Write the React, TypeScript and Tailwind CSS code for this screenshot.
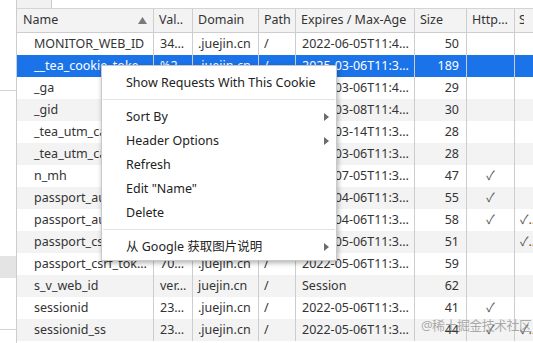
import { useMemo } from "react";

type Row = {
  name: string;
  value: string;
  domain: string;
  path: string;
  expires: string;
  size: string;
  http?: boolean;
  secure?: boolean;
};

const rows: Row[] = [
  { name: "MONITOR_WEB_ID", value: "34…", domain: ".juejin.cn", path: "/", expires: "2022-06-05T11:4…", size: "50" },
  { name: "__tea_cookie_toke…", value: "%2…", domain: ".juejin.cn", path: "/", expires: "2025-03-06T11:3…", size: "189" },
  { name: "_ga", value: "GA…", domain: ".juejin.cn", path: "/", expires: "2024-03-06T11:4…", size: "29" },
  { name: "_gid", value: "GA…", domain: ".juejin.cn", path: "/", expires: "2022-03-08T11:4…", size: "30" },
  { name: "_tea_utm_ca…", value: "{\"…", domain: ".juejin.cn", path: "/", expires: "2022-03-14T11:3…", size: "28" },
  { name: "_tea_utm_ca…", value: "{\"…", domain: ".juejin.cn", path: "/", expires: "2022-03-06T11:3…", size: "28" },
  { name: "n_mh", value: "9-…", domain: ".juejin.cn", path: "/", expires: "2022-07-05T11:3…", size: "47", http: true },
  { name: "passport_au…", value: "%7…", domain: ".juejin.cn", path: "/", expires: "2022-04-06T11:3…", size: "55", http: true },
  { name: "passport_au…", value: "%7…", domain: ".juejin.cn", path: "/", expires: "2022-04-06T11:3…", size: "58", http: true, secure: true },
  { name: "passport_cs…", value: "70…", domain: ".juejin.cn", path: "/", expires: "2022-05-06T11:3…", size: "51", secure: true },
  { name: "passport_csrf_tok…", value: "70…", domain: ".juejin.cn", path: "/", expires: "2022-05-06T11:3…", size: "59" },
  { name: "s_v_web_id", value: "ver…", domain: "juejin.cn", path: "/", expires: "Session", size: "62" },
  { name: "sessionid", value: "23…", domain: ".juejin.cn", path: "/", expires: "2022-05-06T11:3…", size: "41", http: true },
  { name: "sessionid_ss", value: "23…", domain: ".juejin.cn", path: "/", expires: "2022-05-06T11:3…", size: "44", http: true, secure: true },
];

const cols = "grid grid-cols-[137px_39px_66px_37px_119px_52px_48px_40px]";
const cell = "border-r border-[#cdcdcd] overflow-hidden whitespace-nowrap";

const Arrow = () => (
  <svg width="5" height="8" viewBox="0 0 5 8" className="fill-[#6b6b6b]">
    <path d="M0 0 L5 4 L0 8 Z" />
  </svg>
);

const MenuItem = ({ label, sub }: { label: string; sub?: boolean }) => (
  <div className="flex h-[24px] items-center justify-between pl-[24px] pr-[7px]">
    <span>{label}</span>
    {sub && <Arrow />}
  </div>
);

const Sep = () => (
  <div className="h-[10px] px-[1px] pt-[4px]">
    <div className="h-px bg-[#e3e3e3]" />
  </div>
);

export default function App() {
  const list = useMemo(() => rows, []);
  return (
    <div className="relative flex h-[343px] w-[533px] overflow-hidden bg-white font-['Noto_Sans','Noto_Sans_CJK_SC',sans-serif] text-[12.5px] text-[#333]">
      {/* left panel */}
      <div className="flex w-[17px] shrink-0 flex-col border-r border-[#cdcdcd]">
        <div className="h-[91px] border-b border-[#d4d4d4]" />
        <div className="h-[165px]" />
        <div className="h-[22px] bg-[#e4e4e4]" />
        <div className="h-[52px] border-b border-[#d4d4d4]" />
      </div>

      {/* table */}
      <div className="flex min-w-0 flex-1 flex-col">
        <div className="flex h-[9px] border-b border-[#d4d4d4]">
          <div className="w-[35px] border-r border-[#cdcdcd] bg-[#f1f1f1]" />
          <div className="flex-1 bg-white" />
        </div>
        <div className={`${cols} h-[24px] border-b border-[#cdcdcd] bg-[#f3f3f3]`}>
          <div className={`${cell} flex items-center justify-between pl-[6px] pr-[6px]`}>
            <span>Name</span>
            <svg width="9" height="7" viewBox="0 0 9 7" className="fill-[#7a7a7a]">
              <path d="M4.5 0 L9 7 L0 7 Z" />
            </svg>
          </div>
          <div className={`${cell} flex items-center pl-[5px]`}>Val..</div>
          <div className={`${cell} flex items-center pl-[5px]`}>Domain</div>
          <div className={`${cell} flex items-center pl-[5px]`}>Path</div>
          <div className={`${cell} flex items-center pl-[5px]`}>Expires / Max-Age</div>
          <div className={`${cell} flex items-center pl-[5px]`}>Size</div>
          <div className={`${cell} flex items-center pl-[5px]`}>Http…</div>
          <div className={`${cell} flex items-center pl-[4px]`}>
            <span className="inline-block w-[5px] overflow-hidden">S</span>
          </div>
        </div>
        {list.map((r, i) => {
          const sel = i === 1;
          const bg = sel ? "bg-[#1a73e8] text-white" : i % 2 === 1 ? "bg-[#f3f3f3]" : "bg-white";
          return (
            <div key={i} className={`${cols} h-[22px] items-stretch ${bg}`}>
              <div className={`${cell} flex items-center pl-[17px]`}>{r.name}</div>
              <div className={`${cell} flex items-center pl-[6px]`}>{r.value}</div>
              <div className={`${cell} flex items-center pl-[5px]`}>{r.domain}</div>
              <div className={`${cell} flex items-center pl-[5px]`}>{r.path}</div>
              <div className={`${cell} flex items-center pl-[6px]`}>{r.expires}</div>
              <div className={`${cell} flex items-center justify-end pr-[7px]`}>{r.size}</div>
              <div className={`${cell} flex items-center justify-center text-[#555]`}>{r.http ? "✓" : ""}</div>
              <div className={`${cell} flex items-center pl-[5px] text-[#555]`}>{r.secure ? "✓…" : ""}</div>
            </div>
          );
        })}
      </div>

      {/* context menu */}
      <div className="absolute left-[101px] top-[65px] w-[236px] border border-[#c9c9c9] bg-white pb-[1px] pt-[5px] text-[#222] shadow-[1px_2px_5px_rgba(0,0,0,0.3)]">
        <MenuItem label="Show Requests With This Cookie" />
        <Sep />
        <MenuItem label="Sort By" sub />
        <MenuItem label="Header Options" sub />
        <MenuItem label="Refresh" />
        <MenuItem label='Edit "Name"' />
        <MenuItem label="Delete" />
        <Sep />
        <MenuItem label="从 Google 获取图片说明" sub />
      </div>

      {/* watermark */}
      <div className="absolute left-[421px] top-[316px] text-[13px] tracking-[-0.6px] text-[#8a8a8a]/70">
        @稀土掘金技术社区
      </div>
    </div>
  );
}
